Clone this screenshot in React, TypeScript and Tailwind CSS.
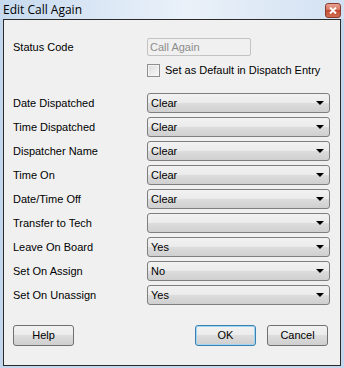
const rows: { label: string; value: string }[] = [
  { label: 'Date Dispatched', value: 'Clear' },
  { label: 'Time Dispatched', value: 'Clear' },
  { label: 'Dispatcher Name', value: 'Clear' },
  { label: 'Time On', value: 'Clear' },
  { label: 'Date/Time Off', value: 'Clear' },
  { label: 'Transfer to Tech', value: '' },
  { label: 'Leave On Board', value: 'Yes' },
  { label: 'Set On Assign', value: 'No' },
  { label: 'Set On Unassign', value: 'Yes' },
]

function Combo({ value }: { value: string }) {
  return (
    <div className="flex-1 h-[20px] flex items-center justify-between rounded-[3px] border border-[#7f7f7f] bg-[linear-gradient(to_bottom,#f2f2f2_0%,#ebebeb_50%,#dddddd_50%,#cfcfcf_100%)] pl-[3px] pr-[5px]">
      <span className="text-[11px] text-black leading-none">{value}</span>
      <span className="w-0 h-0 border-l-[4px] border-r-[4px] border-t-[4px] border-l-transparent border-r-transparent border-t-black" />
    </div>
  )
}

function WinButton({ label, def }: { label: string; def?: boolean }) {
  return (
    <div
      className={`h-[21px] w-[61px] flex items-center justify-center rounded-[3px] border text-[11px] text-black bg-[linear-gradient(to_bottom,#f2f2f2_0%,#ebebeb_50%,#dddddd_50%,#cfcfcf_100%)] ${
        def ? 'border-[#3c7fb1] shadow-[inset_0_0_0_1px_#9fd6f2]' : 'border-[#707070]'
      }`}
    >
      {label}
    </div>
  )
}

export default function App() {
  return (
    <div className="w-[344px] h-[368px] flex flex-col bg-[#c3d6ec] px-[3px] pb-[2px] font-['Liberation_Sans',Arial,sans-serif]">
      <div className="h-[19px] -mx-[3px] px-[3px] flex items-center justify-between bg-[linear-gradient(to_right,#c6d9ee_0%,#dfeaf7_35%,#eaf1f9_55%,#d2e1f2_100%)]">
        <span className="text-[12px] text-black font-['Open_Sans','Liberation_Sans',sans-serif] leading-none pt-[1px]">Edit Call Again</span>
        <div className="w-[16px] h-[15px] mt-[1px] rounded-[3px] border border-[#8a3a2e] bg-[linear-gradient(to_bottom,#e8a392_0%,#d2705b_50%,#c24a33_50%,#cf6e4f_100%)] flex items-center justify-center">
          <svg width="8" height="7" viewBox="0 0 8 7">
            <path d="M1 0.5 L7 6.5 M7 0.5 L1 6.5" stroke="white" strokeWidth="2" />
          </svg>
        </div>
      </div>
      <div className="flex-1 border border-[#2a2a2a] bg-[#f0f0f0] pl-[9px] pr-[10px] pt-[18px] pb-[19px] flex flex-col text-[11px] text-black">
        <div className="flex items-center h-[18px]">
          <span className="w-[134px]">Status Code</span>
          <div className="w-[104px] h-[18px] border border-[#c3c3c3] rounded-[2px] bg-[#f0f0f0] flex items-center pl-[2px] text-[#8d8d8d]">
            Call Again
          </div>
        </div>
        <div className="flex items-center mt-[8px] ml-[134px] h-[13px] gap-[5px]">
          <div className="w-[13px] h-[13px] border border-[#8e8f8f] bg-[linear-gradient(135deg,#dcdcdc,#f8f8f8)] shadow-[inset_0_0_0_1px_#f4f4f4]" />
          <span className="whitespace-nowrap">Set as Default in Dispatch Entry</span>
        </div>
        <div className="mt-[16px] flex flex-col gap-[4px]">
          {rows.map((r) => (
            <div key={r.label} className="flex items-center">
              <span className="w-[134px] whitespace-nowrap">{r.label}</span>
              <Combo value={r.value} />
            </div>
          ))}
        </div>
        <div className="mt-[20px] flex items-center pr-[2px]">
          <WinButton label="Help" />
          <div className="flex-1" />
          <WinButton label="OK" def />
          <div className="w-[11px]" />
          <WinButton label="Cancel" />
        </div>
      </div>
    </div>
  )
}
